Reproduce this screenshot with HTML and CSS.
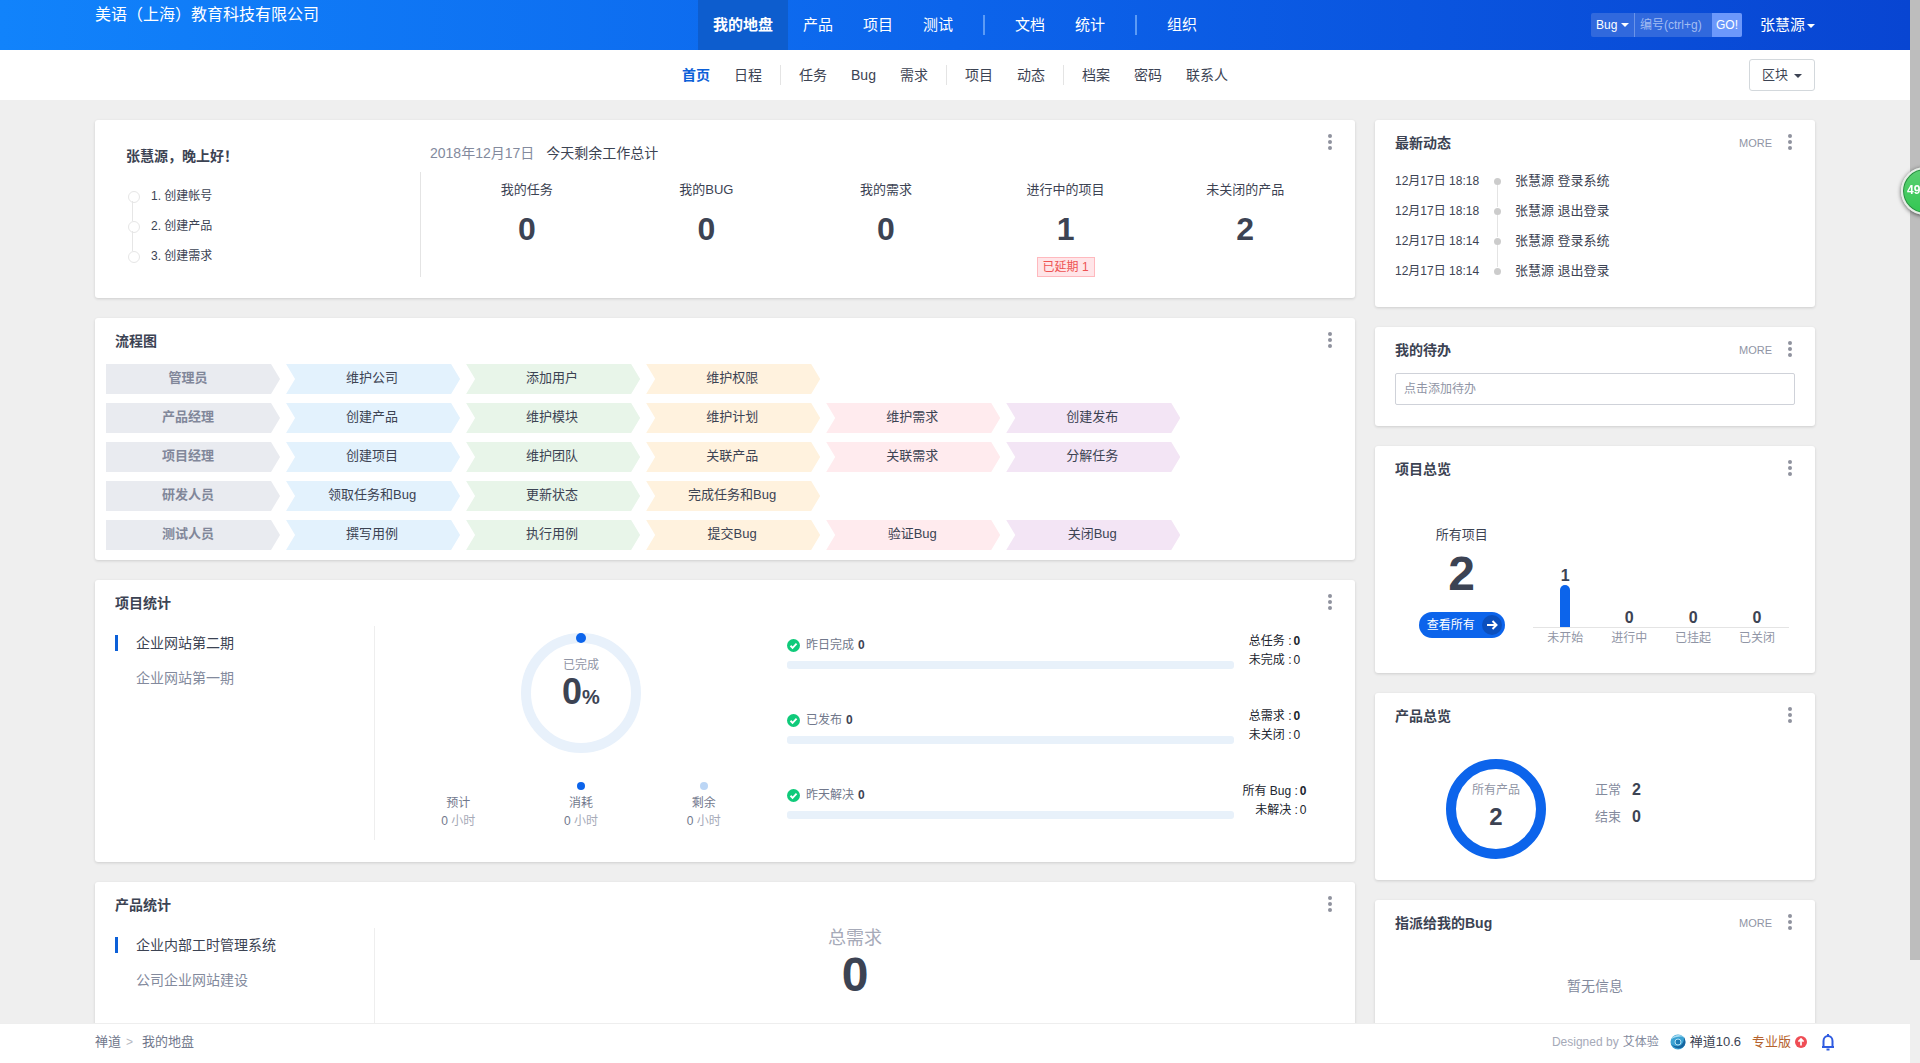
FILE: index.html
```html
<!DOCTYPE html>
<html lang="zh-CN">
<head>
  <meta charset="UTF-8">
  <meta name="viewport" content="width=device-width, initial-scale=1.0">
  <title>我的地盘 - 禅道</title>
  <link rel="stylesheet" href="styles.css">
</head>
<body>

  <header id="header">
    <div class="container header-row">
      <h1 id="company">美语（上海）教育科技有限公司</h1>
      <nav id="mainnav">
        <a href="#" class="active">我的地盘</a>
        <a href="#">产品</a>
        <a href="#">项目</a>
        <a href="#">测试</a>
        <i class="split"></i>
        <a href="#">文档</a>
        <a href="#">统计</a>
        <i class="split"></i>
        <a href="#">组织</a>
      </nav>
      <div id="toolbar">
        <form id="search">
          <span class="select-box caret"><select aria-label="类型"><option>Bug</option></select></span>
          <input type="text" aria-label="编号" placeholder="编号(ctrl+g)">
          <button type="button">GO!</button>
        </form>
        <button type="button" id="user" class="caret">张慧源</button>
      </div>
    </div>
  </header>

  <div id="subheader">
    <div class="container header-row">
      <span></span>
      <nav id="subnav">
        <a href="#" class="active">首页</a>
        <a href="#">日程</a>
        <i class="split"></i>
        <a href="#">任务</a>
        <a href="#">Bug</a>
        <a href="#">需求</a>
        <i class="split"></i>
        <a href="#">项目</a>
        <a href="#">动态</a>
        <i class="split"></i>
        <a href="#">档案</a>
        <a href="#">密码</a>
        <a href="#">联系人</a>
      </nav>
      <div class="block-menu"><button type="button" id="block-btn" class="caret">区块</button></div>
    </div>
  </div>

  <main>
    <div class="container dashboard">

      <div class="col">
        <section class="panel welcome">
          <div class="guide">
            <h2>张慧源，晚上好！</h2>
            <ol>
              <li>1. 创建帐号</li>
              <li>2. 创建产品</li>
              <li>3. 创建需求</li>
            </ol>
          </div>
          <div class="today">
            <p class="today-title"><time>2018年12月17日</time>今天剩余工作总计</p>
            <div class="tiles">
              <div><span>我的任务</span><strong>0</strong></div>
              <div><span>我的BUG</span><strong>0</strong></div>
              <div><span>我的需求</span><strong>0</strong></div>
              <div><span>进行中的项目</span><strong>1</strong><em>已延期 1</em></div>
              <div><span>未关闭的产品</span><strong>2</strong></div>
            </div>
          </div>
          <button type="button" class="dots" aria-label="更多操作"><i></i><i></i><i></i></button>
        </section>

        <section class="panel flow">
          <div class="panel-head">
            <h2>流程图</h2>
            <button type="button" class="dots" aria-label="更多操作"><i></i><i></i><i></i></button>
          </div>
          <div class="flow-rows">
            <div class="flow-row"><b>管理员</b><a href="#">维护公司</a><a href="#">添加用户</a><a href="#">维护权限</a></div>
            <div class="flow-row"><b>产品经理</b><a href="#">创建产品</a><a href="#">维护模块</a><a href="#">维护计划</a><a href="#">维护需求</a><a href="#">创建发布</a></div>
            <div class="flow-row"><b>项目经理</b><a href="#">创建项目</a><a href="#">维护团队</a><a href="#">关联产品</a><a href="#">关联需求</a><a href="#">分解任务</a></div>
            <div class="flow-row"><b>研发人员</b><a href="#">领取任务和Bug</a><a href="#">更新状态</a><a href="#">完成任务和Bug</a></div>
            <div class="flow-row"><b>测试人员</b><a href="#">撰写用例</a><a href="#">执行用例</a><a href="#">提交Bug</a><a href="#">验证Bug</a><a href="#">关闭Bug</a></div>
          </div>
        </section>

        <section class="panel">
          <div class="panel-head">
            <h2>项目统计</h2>
            <button type="button" class="dots" aria-label="更多操作"><i></i><i></i><i></i></button>
          </div>
          <div class="stats">
            <nav class="side-tabs">
              <a href="#" class="active">企业网站第二期</a>
              <a href="#">企业网站第一期</a>
            </nav>
            <div class="progress">
              <div class="ring">
                <span>已完成</span>
                <strong>0<small>%</small></strong>
              </div>
              <div class="hours">
                <div><i></i><span>预计</span><p>0 <small>小时</small></p></div>
                <div><i class="used"></i><span>消耗</span><p>0 <small>小时</small></p></div>
                <div><i class="left"></i><span>剩余</span><p>0 <small>小时</small></p></div>
              </div>
            </div>
            <div class="bars">
              <div class="bar-row">
                <div class="bar-main">
                  <p><svg class="check" viewBox="0 0 14 14"><circle cx="7" cy="7" r="7"/><path d="M3.8 7.3l2.2 2.2 4.3-4.5"/></svg>昨日完成 <b>0</b></p>
                  <div class="bar"></div>
                </div>
                <table>
                  <tr><th>总任务 :</th><td><b>0</b></td></tr>
                  <tr><th>未完成 :</th><td>0</td></tr>
                </table>
              </div>
              <div class="bar-row">
                <div class="bar-main">
                  <p><svg class="check" viewBox="0 0 14 14"><circle cx="7" cy="7" r="7"/><path d="M3.8 7.3l2.2 2.2 4.3-4.5"/></svg>已发布 <b>0</b></p>
                  <div class="bar"></div>
                </div>
                <table>
                  <tr><th>总需求 :</th><td><b>0</b></td></tr>
                  <tr><th>未关闭 :</th><td>0</td></tr>
                </table>
              </div>
              <div class="bar-row">
                <div class="bar-main">
                  <p><svg class="check" viewBox="0 0 14 14"><circle cx="7" cy="7" r="7"/><path d="M3.8 7.3l2.2 2.2 4.3-4.5"/></svg>昨天解决 <b>0</b></p>
                  <div class="bar"></div>
                </div>
                <table>
                  <tr><th>所有 Bug :</th><td><b>0</b></td></tr>
                  <tr><th>未解决 :</th><td>0</td></tr>
                </table>
              </div>
            </div>
          </div>
        </section>

        <section class="panel">
          <div class="panel-head">
            <h2>产品统计</h2>
            <button type="button" class="dots" aria-label="更多操作"><i></i><i></i><i></i></button>
          </div>
          <div class="stats product-stats">
            <nav class="side-tabs">
              <a href="#" class="active">企业内部工时管理系统</a>
              <a href="#">公司企业网站建设</a>
            </nav>
            <div class="total">
              <span>总需求</span>
              <strong>0</strong>
            </div>
          </div>
        </section>
      </div>

      <div class="col">
        <section class="panel dynamic">
          <div class="panel-head">
            <h2>最新动态</h2>
            <a href="#" class="more">MORE</a>
            <button type="button" class="dots" aria-label="更多操作"><i></i><i></i><i></i></button>
          </div>
          <ul class="timeline">
            <li><time>12月17日 18:18</time><span>张慧源 登录系统</span></li>
            <li><time>12月17日 18:18</time><span>张慧源 退出登录</span></li>
            <li><time>12月17日 18:14</time><span>张慧源 登录系统</span></li>
            <li><time>12月17日 18:14</time><span>张慧源 退出登录</span></li>
          </ul>
        </section>

        <section class="panel todo">
          <div class="panel-head">
            <h2>我的待办</h2>
            <a href="#" class="more">MORE</a>
            <button type="button" class="dots" aria-label="更多操作"><i></i><i></i><i></i></button>
          </div>
          <input type="text" aria-label="添加待办" placeholder="点击添加待办">
        </section>

        <section class="panel">
          <div class="panel-head">
            <h2>项目总览</h2>
            <button type="button" class="dots" aria-label="更多操作"><i></i><i></i><i></i></button>
          </div>
          <div class="overview">
            <div class="all-projects">
              <span>所有项目</span>
              <strong>2</strong>
              <a href="#">查看所有<svg viewBox="0 0 20 20"><circle cx="10" cy="10" r="10"/><path d="M5 10h9M10.500 6l4 4-4 4"/></svg></a>
            </div>
            <div class="chart">
              <div><b>1</b><i></i><span>未开始</span></div>
              <div><b>0</b><span>进行中</span></div>
              <div><b>0</b><span>已挂起</span></div>
              <div><b>0</b><span>已关闭</span></div>
            </div>
          </div>
        </section>

        <section class="panel">
          <div class="panel-head">
            <h2>产品总览</h2>
            <button type="button" class="dots" aria-label="更多操作"><i></i><i></i><i></i></button>
          </div>
          <div class="product-view">
            <div class="circle">
              <span>所有产品</span>
              <strong>2</strong>
            </div>
            <dl>
              <dt>正常</dt><dd>2</dd>
              <dt>结束</dt><dd>0</dd>
            </dl>
          </div>
        </section>

        <section class="panel">
          <div class="panel-head">
            <h2>指派给我的Bug</h2>
            <a href="#" class="more">MORE</a>
            <button type="button" class="dots" aria-label="更多操作"><i></i><i></i><i></i></button>
          </div>
          <p class="empty">暂无信息</p>
        </section>
      </div>

    </div>
  </main>

  <footer id="footer">
    <div class="container footer-row">
      <nav class="crumbs"><a href="#">禅道</a><i>&gt;</i><a href="#">我的地盘</a></nav>
      <div class="powered">
        <span class="designed">Designed by <a href="#">艾体验</a></span>
        <a href="#" class="version">
          <svg viewBox="0 0 16 16">
            <circle cx="8" cy="8" r="7.500" fill="#3ba3d4"/>
            <path d="M1 5C4 0 11 0 14 3C10 2 5 3 1 5z" fill="#a9ddf3"/>
            <path d="M14 3c2 4 2 8-1 10-4 3-9 1-12-3 4 3 9 3 11 0 2-2 2-5 2-7z" fill="#17659f"/>
            <circle cx="8" cy="8" r="3" fill="#1c7cb5" stroke="#b5e2f5"/>
          </svg>禅道10.6</a>
        <a href="#" class="pro">专业版<svg viewBox="0 0 14 14"><circle cx="7" cy="7" r="7"/><path d="M7 11V4M4 6.500l3-3 3 3"/></svg></a>
        <button type="button" class="bell" aria-label="通知"><svg viewBox="0 0 14 18"><path d="M1 14h12M2.500 14V8a4.500 5 0 0 1 9 0v6M7 3V1M5.500 16.500h3"/></svg></button>
      </div>
    </div>
  </footer>

  <div class="scrollbar"></div>
  <div class="speed-ball">49</div>

</body>
</html>
```

FILE: styles.css
```css
* {
  box-sizing: border-box;
}

body {
  display: flex;
  flex-direction: column;
  height: 100vh;
  margin: 0;
  padding-right: 10px;
  overflow: hidden;
  background: #efefef;
  color: #3c4353;
  font-family: "Liberation Sans", "Noto Sans CJK SC", sans-serif;
  font-size: 13px;
  line-height: 20px;
}

h1, h2, p, ol, ul, dl, dd {
  margin: 0;
  padding: 0;
}

ol, ul {
  list-style: none;
}

a {
  color: inherit;
  text-decoration: none;
}

i, em {
  font-style: normal;
}

button, input, select {
  margin: 0;
  padding: 0;
  border: none;
  background: none;
  color: inherit;
  font: inherit;
}

h2 {
  font-size: 14px;
}

.container {
  margin: 0 95px;
}

.caret::after {
  content: "";
  display: inline-block;
  border: 4px solid transparent;
  border-top-color: currentColor;
  border-bottom: none;
  vertical-align: middle;
}

/* header */
#header {
  background: linear-gradient(90deg, #1183fb 0%, #0c64eb 50%, #0845d2 100%);
  color: #fff;
}

.header-row {
  display: grid;
  grid-template-columns: 1fr auto 1fr;
  height: 50px;
}

#company {
  padding-top: 5px;
  font-size: 16px;
  font-weight: normal;
}

#mainnav, #subnav {
  display: flex;
  align-items: center;
}

#mainnav a {
  padding: 0 15px;
  font-size: 15px;
  line-height: 50px;
}

#mainnav .active {
  background: #0d5dce;
  font-weight: bold;
}

#mainnav .split {
  width: 2px;
  height: 20px;
  margin: 0 15px;
  background: #5c9bf5;
}

#toolbar {
  display: flex;
  justify-content: flex-end;
  align-items: center;
  gap: 18px;
}

#search {
  display: flex;
  height: 24px;
  border-radius: 2px;
  background: #3169dd;
  font-size: 12px;
}

.select-box {
  display: flex;
  align-items: center;
  padding: 0 5px;
  border-right: 1px solid #6a93e8;
}

#search select {
  width: 25px;
  appearance: none;
}

#search input {
  width: 77px;
  padding-left: 5px;
}

#search input::placeholder {
  color: #a3bdf2;
}

#search button {
  width: 30px;
  border-radius: 0 2px 2px 0;
  background: #6c98fb;
}

#user {
  font-size: 15px;
}

#user::after {
  margin-left: 2px;
}

#subheader {
  background: #fff;
}

#subnav a {
  padding: 0 12px;
  font-size: 14px;
}

#subnav .active {
  color: #0c60d8;
  font-weight: bold;
}

#subnav .split {
  width: 1px;
  height: 20px;
  margin: 0 6px;
  background: #e4e4e4;
}

.block-menu {
  display: flex;
  justify-content: flex-end;
  align-items: center;
}

#block-btn {
  width: 66px;
  height: 32px;
  border: 1px solid #d3d8dc;
  border-radius: 3px;
}

#block-btn::after {
  margin-left: 6px;
}

/* dashboard */
main {
  flex: 1;
  min-height: 0;
  overflow-y: auto;
  scrollbar-width: none;
}

.dashboard {
  display: grid;
  grid-template-columns: 63fr 22fr;
  align-items: start;
  gap: 20px;
  padding: 20px 0;
}

.col {
  display: flex;
  flex-direction: column;
  gap: 20px;
  min-width: 0;
}

.panel {
  padding: 0 20px;
  border-radius: 3px;
  background: #fff;
  box-shadow: 0 1px 3px rgba(0, 0, 0, .14);
}

.panel-head {
  display: flex;
  align-items: center;
  height: 46px;
}

.panel-head h2 {
  flex: 1;
}

.more {
  margin-right: 13px;
  color: #9095a5;
  font-size: 11px;
}

.dots {
  display: flex;
  flex-direction: column;
  gap: 2px;
  padding: 0 3px 2px;
}

.dots i {
  width: 4px;
  height: 4px;
  border-radius: 2px;
  background: #8f929e;
}

/* welcome */
.welcome {
  display: flex;
  align-items: flex-start;
  height: 178px;
}

.guide {
  width: 25%;
  padding: 26px 0 0 11px;
}

.guide ol {
  margin-top: 15px;
}

.guide li {
  position: relative;
  padding-left: 25px;
  font-size: 12px;
  line-height: 30px;
}

.guide li::before {
  content: "";
  position: absolute;
  left: 2px;
  top: 10px;
  width: 10px;
  height: 10px;
  border: 1px solid #e6e6e6;
  border-radius: 50%;
}

.guide li + li::after {
  content: "";
  position: absolute;
  left: 6px;
  top: -10px;
  width: 1px;
  height: 20px;
  background: #e6e6e6;
}

.today {
  flex: 1;
  padding-top: 23px;
}

.today-title {
  padding-left: 10px;
  font-size: 14px;
}

.today-title time {
  margin-right: 12px;
  color: #838a9d;
}

.tiles {
  display: grid;
  grid-template-columns: repeat(5, 1fr);
  height: 105px;
  margin-top: 9px;
  padding: 8px 0 0 16px;
  border-left: 1px solid #e4e4e4;
  text-align: center;
}

.tiles div {
  display: flex;
  flex-direction: column;
  align-items: center;
}

.tiles strong {
  margin-top: 9px;
  font-size: 32px;
  line-height: 40px;
}

.tiles em {
  margin-top: 8px;
  padding: 0 5px;
  border: 1px solid #ffb9be;
  background: #ffe5e8;
  color: #ee5252;
  font-size: 12px;
  line-height: 18px;
}

.welcome .dots {
  margin: 14px 0 0 -10px;
}

/* flow chart */
.flow {
  padding: 0 20px 10px 11px;
}

.flow h2 {
  padding-left: 9px;
}

.flow-rows {
  display: grid;
  gap: 9px;
}

.flow-row {
  display: grid;
  grid-template-columns: repeat(6, 14%);
  gap: 8px;
  line-height: 28px;
  text-align: center;
}

.flow-row > * {
  height: 30px;
  margin-right: -2px;
  padding-right: 2px;
  background: #e3f2fd;
  clip-path: polygon(0 0, calc(100% - 9px) 0, 100% 50%, calc(100% - 9px) 100%, 0 100%, 9px 50%);
}

.flow-row b {
  padding-right: 10px;
  background: #e9ebf0;
  color: #81879a;
  clip-path: polygon(0 0, calc(100% - 9px) 0, 100% 50%, calc(100% - 9px) 100%, 0 100%);
}

.flow-row a:nth-child(3) {
  background: #e8f5e9;
}

.flow-row a:nth-child(4) {
  background: #fff2de;
}

.flow-row a:nth-child(5) {
  background: #ffebee;
}

.flow-row a:nth-child(6) {
  background: #f3e5f5;
}

/* statistics */
.stats {
  display: grid;
  grid-template-columns: 65fr 103fr 132fr;
  height: 236px;
  padding-right: 20px;
}

.product-stats {
  grid-template-columns: 260fr 960fr;
  padding-right: 0;
}

.side-tabs {
  display: flex;
  flex-direction: column;
  gap: 15px;
  height: 214px;
  padding-top: 7px;
  border-right: 1px solid #eee;
}

.side-tabs a {
  display: flex;
  align-items: center;
  color: #838a9d;
  font-size: 14px;
}

.side-tabs a::before {
  content: "";
  width: 3px;
  height: 16px;
  margin-right: 18px;
}

.side-tabs .active {
  color: #3c4353;
}

.side-tabs .active::before {
  background: #0c60d8;
}

.progress {
  padding: 7px 22px 0;
}

.ring {
  position: relative;
  width: 120px;
  height: 120px;
  margin: 0 auto;
  padding-top: 12px;
  border: 10px solid #e8f1fb;
  border-radius: 50%;
  text-align: center;
}

.ring::before {
  content: "";
  position: absolute;
  left: 45px;
  top: -10px;
  width: 10px;
  height: 10px;
  border-radius: 50%;
  background: #0c64eb;
}

.ring span {
  display: block;
  color: #9095a5;
  font-size: 12px;
}

.ring strong {
  display: block;
  font-size: 36px;
  line-height: 34px;
}

.ring small {
  font-size: 20px;
}

.hours {
  display: grid;
  grid-template-columns: repeat(3, 1fr);
  margin-top: 29px;
  color: #71788c;
  font-size: 12px;
  line-height: 18px;
  text-align: center;
}

.hours i {
  display: block;
  width: 8px;
  height: 8px;
  margin: 0 auto 4px;
  border-radius: 50%;
}

.hours .used {
  background: #0c64eb;
}

.hours .left {
  background: #bcd6f5;
}

.hours small {
  color: #a6aab8;
  font-size: 12px;
}

.bar-row {
  display: grid;
  grid-template-columns: 1fr 81px;
  height: 75px;
  font-size: 12px;
}

.bar-main {
  padding-top: 9px;
}

.bar-main p {
  display: flex;
  align-items: center;
  gap: 6px;
  color: #71788c;
}

.bar-main b {
  margin-left: -2px;
  color: #3c4353;
}

.check {
  width: 13px;
  height: 13px;
  fill: #0fca7a;
}

.check path {
  fill: none;
  stroke: #fff;
  stroke-width: 2;
}

.bar {
  height: 8px;
  margin-top: 6px;
  border-radius: 3px;
  background: #e8f1fa;
}

.bar-row table {
  align-self: start;
  margin: 6px auto 0;
  border-spacing: 0;
  color: #20242e;
  line-height: 19px;
}

.bar-row th {
  padding: 0 2px 0 0;
  font-weight: normal;
  text-align: right;
}

.bar-row td {
  padding: 0;
}

.total {
  text-align: center;
}

.total span {
  display: block;
  color: #a6aab8;
  font-size: 18px;
}

.total strong {
  display: block;
  margin-top: 2px;
  font-size: 48px;
  line-height: 50px;
}

/* right column */
.timeline {
  height: 141px;
}

.timeline li {
  display: flex;
  align-items: center;
  position: relative;
  height: 30px;
}

.timeline time {
  width: 99px;
  font-size: 12px;
}

.timeline li::before {
  content: "";
  order: 1;
  width: 7px;
  height: 7px;
  margin-right: 14px;
  border-radius: 50%;
  background: #ccc;
}

.timeline li + li::after {
  content: "";
  position: absolute;
  left: 102px;
  top: -11px;
  width: 1px;
  height: 22px;
  background: #e4e4e4;
}

.timeline span {
  order: 2;
}

.todo input {
  display: block;
  width: 100%;
  height: 32px;
  margin-bottom: 21px;
  padding: 0 8px;
  border: 1px solid #cfd2d9;
  border-radius: 2px;
  font-size: 12px;
}

.todo input::placeholder {
  color: #9095a5;
}

.overview {
  display: grid;
  grid-template-columns: 1fr 2fr;
  height: 181px;
}

.all-projects {
  display: flex;
  flex-direction: column;
  align-items: center;
  padding-top: 33px;
}

.all-projects strong {
  margin-top: 4px;
  font-size: 48px;
  line-height: 50px;
}

.all-projects a {
  display: flex;
  align-items: center;
  gap: 7px;
  height: 26px;
  margin-top: 13px;
  padding: 0 3px 0 8px;
  border-radius: 13px;
  background: #0c64eb;
  color: #fff;
  font-size: 12px;
}

.all-projects svg {
  width: 20px;
  height: 20px;
  fill: #0b4fbd;
}

.all-projects path {
  fill: none;
  stroke: #fff;
  stroke-width: 2;
}

.chart {
  display: grid;
  grid-template-columns: repeat(4, 1fr);
  height: 157px;
  padding: 0 6px 0 5px;
  text-align: center;
}

.chart div {
  display: flex;
  flex-direction: column;
  justify-content: flex-end;
  align-items: center;
}

.chart b {
  font-size: 16px;
  line-height: 18px;
}

.chart i {
  width: 10px;
  height: 42px;
  border-radius: 5px 5px 0 0;
  background: #0c64eb;
}

.chart span {
  width: 100%;
  height: 22px;
  border-top: 1px solid #e4e4e4;
  color: #9095a5;
  font-size: 12px;
}

.product-view {
  display: flex;
  gap: 49px;
  height: 141px;
  padding: 20px 0 0 51px;
}

.circle {
  width: 100px;
  height: 100px;
  padding-top: 11px;
  border: 10px solid #0c64eb;
  border-radius: 50%;
  text-align: center;
}

.circle span {
  display: block;
  color: #9095a5;
  font-size: 12px;
}

.circle strong {
  display: block;
  margin-top: 4px;
  font-size: 24px;
  line-height: 26px;
}

.product-view dl {
  display: grid;
  grid-template-columns: auto auto;
  align-content: start;
  gap: 7px 11px;
  padding-top: 21px;
}

.product-view dt {
  color: #838a9d;
}

.product-view dd {
  font-size: 16px;
  font-weight: bold;
}

.empty {
  height: 140px;
  padding-top: 30px;
  color: #838a9d;
  font-size: 14px;
  text-align: center;
}

/* footer */
#footer {
  border-top: 1px solid #eee;
  background: #fff;
}

.footer-row {
  display: flex;
  justify-content: space-between;
  align-items: center;
  height: 39px;
  padding-bottom: 3px;
}

.crumbs {
  color: #71788c;
}

.crumbs i {
  margin: 0 9px 0 5px;
  color: #b5b8c2;
  font-size: 12px;
}

.powered {
  display: flex;
  align-items: center;
  gap: 11px;
  margin-right: -20px;
}

.powered a, .bell {
  display: flex;
  align-items: center;
  gap: 4px;
}

.designed {
  display: flex;
  gap: 4px;
  color: #a6aab8;
  font-size: 12px;
}

.designed a {
  color: #838a9d;
}

.version svg {
  width: 16px;
  height: 16px;
}

.pro {
  color: #b5622d;
}

.pro svg {
  width: 12px;
  height: 12px;
  fill: #ef4d55;
}

.pro path {
  fill: none;
  stroke: #fff;
  stroke-width: 2;
}

.bell {
  margin-left: 3px;
}

.bell svg {
  width: 14px;
  height: 18px;
  fill: none;
  stroke: #2f5be0;
  stroke-width: 2;
}

/* window edge */
.scrollbar {
  position: fixed;
  top: 0;
  right: 0;
  bottom: 103px;
  width: 10px;
  background: #bdbdbd;
}

.speed-ball {
  position: fixed;
  top: 167px;
  right: -29px;
  width: 48px;
  height: 48px;
  padding-left: 4px;
  border: 2px solid #e6ece6;
  border-radius: 50%;
  background: linear-gradient(#5bd072, #33c752);
  box-shadow: 0 1px 4px rgba(0, 0, 0, .6), inset 0 0 0 1px #2b8a42;
  color: #fff;
  font-size: 12px;
  font-weight: bold;
  line-height: 42px;
}
```
